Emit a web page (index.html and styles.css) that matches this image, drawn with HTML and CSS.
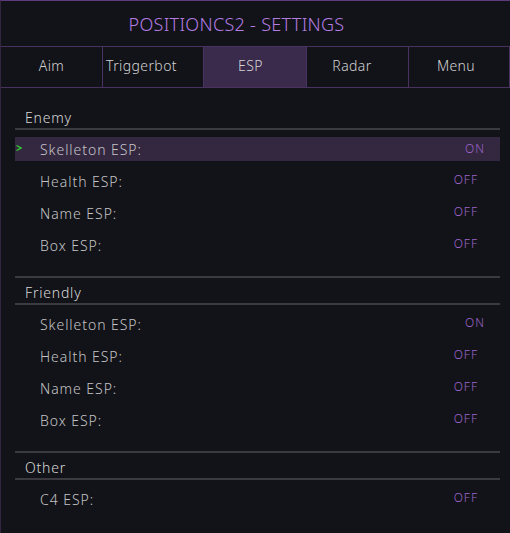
FILE: index.html
```html
<!DOCTYPE html>
<html>
<head>
<meta charset="utf-8">
<link rel="stylesheet" href="styles.css">
</head>
<body>
<div class="window">
  <div class="title">POSITIONCS2 - SETTINGS</div>
  <div class="tabs">
    <div class="tab t-aim">Aim</div>
    <div class="tab t-trig">Triggerbot</div>
    <div class="tab t-esp active">ESP</div>
    <div class="tab t-radar">Radar</div>
    <div class="tab t-menu">Menu</div>
  </div>
  <div class="content">
    <div class="section first">
      <div class="header">Enemy</div>
      <div class="row selected"><svg class="cursor" width="6" height="6" viewBox="0 0 6 6"><polyline points="0.5,0.5 5,3 0.5,5.5" fill="none" stroke="#2ed82e" stroke-width="1.2"/></svg><span class="label">Skelleton ESP:</span><span class="val on">ON</span></div>
      <div class="row"><span class="label">Health ESP:</span><span class="val off">OFF</span></div>
      <div class="row"><span class="label">Name ESP:</span><span class="val off">OFF</span></div>
      <div class="row"><span class="label">Box ESP:</span><span class="val off">OFF</span></div>
    </div>
    <div class="section">
      <div class="header">Friendly</div>
      <div class="row"><span class="label">Skelleton ESP:</span><span class="val on">ON</span></div>
      <div class="row"><span class="label">Health ESP:</span><span class="val off">OFF</span></div>
      <div class="row"><span class="label">Name ESP:</span><span class="val off">OFF</span></div>
      <div class="row"><span class="label">Box ESP:</span><span class="val off">OFF</span></div>
    </div>
    <div class="section">
      <div class="header">Other</div>
      <div class="row"><span class="label">C4 ESP:</span><span class="val off">OFF</span></div>
    </div>
  </div>
</div>
</body>
</html>
```
FILE: styles.css
```css
html, body {
  margin: 0;
  padding: 0;
  background: #121318;
}
.window {
  width: 510px;
  height: 533px;
  box-sizing: border-box;
  border-top: 1px solid #5e3a7c;
  border-left: 1px solid #33243f;
  background: #121318;
  font-family: "Noto Sans", sans-serif;
  font-weight: 300;
  overflow: hidden;
}
.title {
  height: 45px;
  display: flex;
  align-items: center;
  justify-content: center;
  color: #b47ce2;
  font-size: 18px;
  letter-spacing: 0.3px;
  padding-right: 38px;
}
.tabs {
  display: grid;
  grid-template-columns: 102px 101px 103px 102px 101px;
  height: 42px;
  border-top: 1px solid #4a3260;
  border-bottom: 1px solid #4a3260;
  box-sizing: border-box;
}
.tab {
  display: flex;
  align-items: center;
  justify-content: center;
  color: #d2d2d4;
  font-size: 14px;
  letter-spacing: 0.4px;
  border-right: 1px solid #4a3260;
  padding-bottom: 3px;
}
.tab.active {
  background: #3a2a4c;
}
.t-trig { padding-right: 23px; }
.t-esp { padding-right: 9px; }
.t-radar { padding-right: 11px; }
.t-menu { padding-right: 6px; }
.content {
  padding: 13px 10px 0 14px;
}
.section {
  border-top: 2px solid #3a3a40;
  padding-bottom: 11px;
}
.section.first {
  border-top-color: transparent;
}
.header {
  height: 27px;
  box-sizing: border-box;
  padding: 5px 0 0 10px;
  color: #d8d8d8;
  font-size: 14px;
  letter-spacing: 0.8px;
  border-bottom: 2px solid #3a3a40;
  line-height: 20px;
}
.header + .row {
  margin-top: 7px;
}
.row {
  position: relative;
  height: 24px;
  margin-bottom: 8px;
  display: flex;
  align-items: center;
  font-size: 14px;
  letter-spacing: 0.95px;
  color: #c4c4c6;
}
.row.selected {
  background: #342740;
}
.label {
  padding-left: 25px;
  flex: 1;
}
.cursor {
  position: absolute;
  left: 1px;
  top: 8px;
}
.val {
  font-size: 12px;
  letter-spacing: 1px;
  color: #9d66cc;
  margin-bottom: 4px;
}
.row.selected .val {
  margin-bottom: 2px;
}
.val.on {
  padding-right: 15px;
}
.val.off {
  padding-right: 22px;
}
```
